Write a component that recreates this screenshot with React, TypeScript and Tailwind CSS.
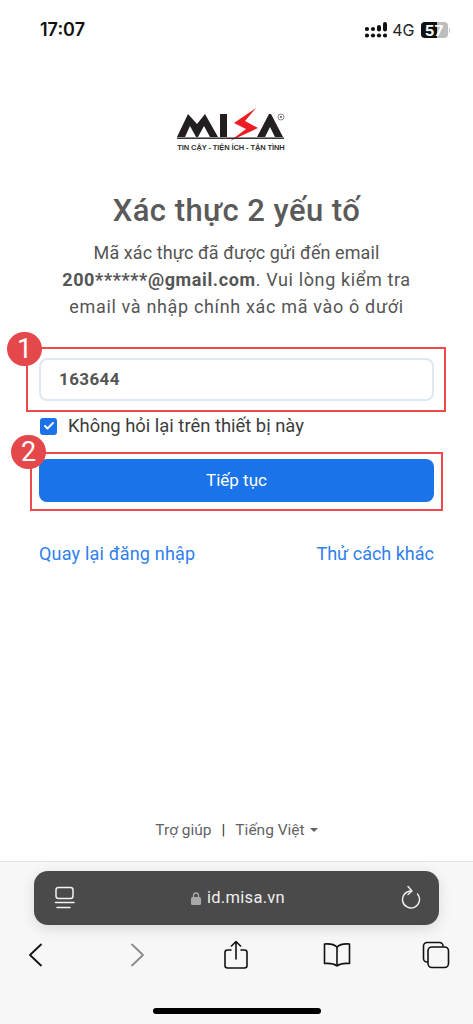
import { Check } from 'lucide-react';

function SignalDots() {
  // 4G dot-style signal indicator: two rows, the last two columns are taller
  return (
    <svg width="22" height="16" viewBox="0 0 22 16" fill="#111">
      <circle cx="2" cy="7" r="2.1" />
      <circle cx="2" cy="13.500" r="2.1" />
      <circle cx="8" cy="7" r="2.1" />
      <circle cx="8" cy="13.500" r="2.1" />
      <rect x="12" y="3" width="4" height="6.500" rx="2" />
      <circle cx="14" cy="13.500" r="2.1" />
      <rect x="18" y="0" width="4" height="9.500" rx="2" />
      <circle cx="20" cy="13.500" r="2.1" />
    </svg>
  );
}

function Battery() {
  return (
    <div className="flex items-center gap-[1px]">
      <div className="relative w-[27px] h-[16px] rounded-[4px] bg-[#bdbdbd] overflow-hidden flex items-center justify-center">
        <div className="absolute left-0 top-0 bottom-0 w-[16px] bg-[#111]" />
        <span className="relative text-white text-[15px] font-bold leading-none font-['Inter',sans-serif]">57</span>
      </div>
      <div className="w-[1.5px] h-[5px] rounded-r bg-[#c4c4c4]" />
    </div>
  );
}

function MisaLogo() {
  return (
    <div className="flex flex-col items-center w-[108px]">
      <svg width="108" height="33" viewBox="0 0 108 33" className="block">
        {/* mountain shapes and bolt of the mark */}
        <polygon points="0,29 11,6 20,16 28,6 41,29 33,29 27,18 21,29 19,29 13,18 8,29" fill="#231f20" />
        <rect x="43" y="6" width="7" height="23" fill="#231f20" />
        <polygon points="79,0 57,15 69,21 53,33 81,20 68,13" fill="#ed1c24" />
        <polygon points="80,29 92,6 94,6 106,29 98,29 93,19 88,29" fill="#231f20" />
        <rect x="0" y="29.500" width="107" height="1.400" fill="#231f20" />
        <circle cx="104" cy="9" r="3" fill="none" stroke="#555" strokeWidth="0.7" />
        <circle cx="104" cy="9" r="1" fill="#555" />
      </svg>
      <div className="mt-[1px] text-[7.5px] font-bold leading-[11px] whitespace-nowrap text-[#333] font-['Liberation_Sans',sans-serif] tracking-[-0.1px]">
        TIN CẬY - TIỆN ÍCH - TẬN TÌNH
      </div>
    </div>
  );
}

function NumberBadge({ n, className }: { n: number; className: string }) {
  return (
    <div
      className={`absolute w-[35px] h-[34px] rounded-full bg-[#e5484a] text-white text-[27px] leading-none flex items-center justify-center ${className}`}
    >
      {n}
    </div>
  );
}

export default function App() {
  return (
    <div className="w-[473px] h-[1024px] bg-white flex flex-col overflow-hidden font-['Roboto',sans-serif]">
      {/* status bar */}
      <div className="h-[60px] flex items-start justify-between pl-[40px] pr-[23px] pt-[19px]">
        <span className="text-[18px] leading-[22px] font-semibold text-[#111] font-['Inter',sans-serif]">17:07</span>
        <div className="flex items-center gap-[6px] pt-[2px]">
          <div className="mr-[-1px]">
            <SignalDots />
          </div>
          <span className="text-[16px] leading-[18px] text-[#222] font-['Inter',sans-serif]">4G</span>
          <Battery />
        </div>
      </div>

      <div className="flex-1 flex flex-col px-[39px]">
        <div className="flex justify-center mt-[48px] pr-[11px]">
          <MisaLogo />
        </div>

        <h1 className="mt-[38px] text-center text-[31px] leading-[40px] font-medium text-[#5a5a5a] tracking-[0.45px]">
          Xác thực 2 yếu tố
        </h1>
        <p className="mt-[8px] text-center text-[18px] leading-[27px] text-[#555] whitespace-nowrap -mx-[20px]">
          <span className="block tracking-[0.08px]">Mã xác thực đã được gửi đến email</span>
          <span className="block tracking-[0.63px]">
            <span className="font-bold">200******@gmail.com</span>. Vui lòng kiểm tra
          </span>
          <span className="block tracking-[0.66px]">email và nhập chính xác mã vào ô dưới</span>
        </p>

        {/* code input */}
        <div className="relative mt-[38px] h-[43px]">
          <div className="h-full rounded-[8px] border-2 border-[#dfe7f1] flex items-center pl-[18px] text-[17px] font-bold text-[#555] tracking-[0.4px]">
            163644
          </div>
          <div className="absolute left-[-13px] right-[-12px] top-[-11px] bottom-[-11px] border-[2.5px] border-[#ec4a4c]" />
          <NumberBadge n={1} className="left-[-32px] top-[-26px]" />
        </div>

        <div className="mt-[15px] flex items-center gap-[11px] h-[20px]">
          <div className="ml-[1px] w-[17px] h-[17px] rounded-[3px] bg-[#1a73e8] flex items-center justify-center">
            <Check size={12} strokeWidth={4} className="text-white" />
          </div>
          <span className="text-[18.4px] leading-[20px] text-[#3c3c3c]">Không hỏi lại trên thiết bị này</span>
        </div>

        {/* continue button */}
        <div className="relative mt-[23px] h-[43px]">
          <div className="h-full rounded-[8px] bg-[#1a73e8] flex items-center justify-center text-white text-[17px]">
            Tiếp tục
          </div>
          <div className="absolute left-[-9px] right-[-9px] top-[-7px] bottom-[-9px] border-[2.5px] border-[#ec4a4c]" />
          <NumberBadge n={2} className="left-[-28px] top-[-24px]" />
        </div>

        <div className="mt-[41px] flex justify-between text-[18px] leading-[22px] text-[#2f80ed]">
          <span className="tracking-[0.2px]">Quay lại đăng nhập</span>
          <span>Thử cách khác</span>
        </div>

        <div className="mt-auto mb-[21px] flex items-center justify-center text-[15.5px] leading-[20px] text-[#5f6368]">
          <span>Trợ giúp</span>
          <span className="mx-[10px] text-[#333]">|</span>
          <span>Tiếng Việt</span>
          <span className="ml-[5px] w-0 h-0 border-x-[4px] border-x-transparent border-t-[4px] border-t-[#5f6368]" />
        </div>
      </div>

      {/* safari toolbar */}
      <div className="h-[163px] bg-[#f7f7f7] border-t border-[#e2e2e2] flex flex-col">
        <div className="mx-[34px] mt-[9px] h-[54px] rounded-[14px] bg-[#4a4a4a] shadow-[0_4px_14px_rgba(0,0,0,0.12)] flex items-center justify-between pl-[20px] pr-[17px]">
          <svg width="22" height="24" viewBox="0 0 22 24" fill="none" stroke="#f2f2f2" strokeWidth="1.5" strokeLinecap="round">
            <rect x="2" y="1.500" width="17" height="11" rx="2.500" />
            <path d="M1.500 16.500h18.500M3 21.500h13" />
          </svg>
          <div className="flex items-center gap-[6px] text-[#f0f0f0] text-[16.5px] tracking-[0.3px]">
            <svg width="10" height="13" viewBox="0 0 10 13" fill="#a9a9a9">
              <rect x="0" y="5" width="10" height="8" rx="1.500" />
              <path d="M2.500 5.500V3.500a2.500 2.500 0 0 1 5 0v2" fill="none" stroke="#a9a9a9" strokeWidth="1.300" />
            </svg>
            <span>id.misa.vn</span>
          </div>
          <svg width="22" height="24" viewBox="0 0 22 24" fill="none" stroke="#f2f2f2" strokeWidth="1.400" strokeLinecap="round" strokeLinejoin="round" className="mt-[-3px]">
            <path d="M17.500 9A8.500 8.500 0 1 1 11 6" />
            <path d="M8 1.500 12 6 8 9.500" />
          </svg>
        </div>

        <div className="mt-[12px] flex items-center pl-[5px] h-[36px]">
          <div className="w-[60px] flex justify-center">
            <svg width="16" height="26" viewBox="0 0 16 26" fill="none" stroke="#111" strokeWidth="1.800" strokeLinecap="round" strokeLinejoin="round">
              <path d="M14 2.500 3 13l11 10.500" />
            </svg>
          </div>
          <div className="w-[60px] ml-[43px] flex justify-center">
            <svg width="16" height="26" viewBox="0 0 16 26" fill="none" stroke="#8a8a8a" strokeWidth="1.800" strokeLinecap="round" strokeLinejoin="round">
              <path d="M2 2.500 13 13 2 23.500" />
            </svg>
          </div>
          <div className="w-[60px] ml-[38px] flex justify-center">
            <svg width="26" height="30" viewBox="0 0 26 30" fill="none" stroke="#111" strokeWidth="1.600" strokeLinecap="round" strokeLinejoin="round">
              <path d="M8 10H4.500A2.500 2.500 0 0 0 2 12.500v13A2.500 2.500 0 0 0 4.500 28h17a2.500 2.500 0 0 0 2.500-2.500v-13A2.500 2.500 0 0 0 21.500 10H18" />
              <path d="M13 19V2M8.500 6 13 1.500 17.500 6" />
            </svg>
          </div>
          <div className="w-[60px] ml-[41px] flex justify-center">
            <svg width="30" height="26" viewBox="0 0 30 26" fill="none" stroke="#111" strokeWidth="1.600" strokeLinejoin="round">
              <path d="M15 5C12.500 2.500 8 1.500 2.500 2v19.500C8 21 12 21.500 15 24c3-2.500 7-3 12.500-2.500V2C22 1.500 17.500 2.500 15 5Z" />
              <path d="M15 5v19" />
            </svg>
          </div>
          <div className="w-[60px] ml-[39px] flex justify-center">
            <svg width="28" height="28" viewBox="0 0 28 28" fill="none" stroke="#111" strokeWidth="1.600">
              <path d="M5.500 21H5a3.500 3.500 0 0 1-3.500-3.500V5A3.500 3.500 0 0 1 5 1.500h12.500A3.500 3.500 0 0 1 21 5v.5" />
              <rect x="6" y="6" width="20.500" height="20.500" rx="4" />
            </svg>
          </div>
        </div>

        <div className="mt-auto mb-[10px] mx-auto w-[168px] h-[6px] rounded-full bg-black" />
      </div>
    </div>
  );
}
